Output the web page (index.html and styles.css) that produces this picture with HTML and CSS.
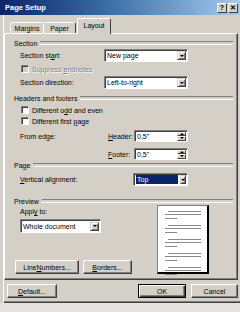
FILE: index.html
```html
<!DOCTYPE html>
<html>
<head>
<meta charset="utf-8">
<link rel="stylesheet" href="styles.css">
</head>
<body>
<div class="dialog">
  <div class="titlebar">
    <span class="title">Page Setup</span>
    <div class="tbtns">
      <span class="tbtn">?</span>
      <span class="tbtn">✕</span>
    </div>
  </div>
  <div class="tabs">
    <div class="tab">Margins</div>
    <div class="tab">Paper</div>
    <div class="tab active">Layout</div>
  </div>
  <div class="panel">
    <div class="grp">Section</div>
    <div class="row r1">
      <span class="lbl">Section st<u>a</u>rt:</span>
      <div class="combo w84"><span class="ctext">New page</span><span class="drop"></span></div>
    </div>
    <div class="row r2">
      <span class="cb dis"></span><span class="distext">Suppress <u>e</u>ndnotes</span>
    </div>
    <div class="row r3">
      <span class="lbl">Section direction:</span>
      <div class="combo w84"><span class="ctext">Left-to-right</span><span class="drop"></span></div>
    </div>
    <div class="grp g2">Headers and footers</div>
    <div class="row r4">
      <span class="cb"></span><span>Different o<u>d</u>d and even</span>
    </div>
    <div class="row r5">
      <span class="cb"></span><span>Different first <u>p</u>age</span>
    </div>
    <div class="row r6">
      <span class="lbl2">From edge:</span>
      <span class="lbl3"><u>H</u>eader:</span>
      <div class="spin"><span class="ctext">0,5"</span><span class="spbtns"><span class="sp up"></span><span class="sp dn"></span></span></div>
    </div>
    <div class="row r7">
      <span class="lbl2"></span>
      <span class="lbl3"><u>F</u>ooter:</span>
      <div class="spin"><span class="ctext">0,5"</span><span class="spbtns"><span class="sp up"></span><span class="sp dn"></span></span></div>
    </div>
    <div class="grp g3">Page</div>
    <div class="row r8">
      <span class="lbl4"><u>V</u>ertical alignment:</span>
      <div class="combo w55"><span class="ctext sel">Top</span><span class="drop"></span></div>
    </div>
    <div class="grp g4">Preview</div>
    <div class="preview">
      <div class="pleft">
        <span class="apply">Appl<u>y</u> to:</span>
        <div class="combo w81"><span class="ctext">Whole document</span><span class="drop"></span></div>
        <div class="pbtns">
          <span class="btn bln">Line <u>N</u>umbers...</span>
          <span class="btn bbo"><u>B</u>orders...</span>
        </div>
      </div>
      <div class="page">
        <div class="lines">
          <i class="ind"></i><i></i><i class="sh"></i>
          <i class="ind"></i><i></i><i class="sh"></i>
          <i class="ind"></i><i></i><i class="sh"></i>
          <i class="ind"></i><i></i><i class="sh"></i>
          <i class="ind"></i><i></i><i class="sh"></i>
        </div>
      </div>
    </div>
  </div>
  <div class="footer">
    <span class="btn bdef"><u>D</u>efault...</span>
    <span class="spacer"></span>
    <span class="btn bok">OK</span>
    <span class="btn bcan">Cancel</span>
  </div>
</div>
</body>
</html>
```

FILE: styles.css
```css
* { box-sizing: border-box; }
html, body { margin: 0; padding: 0; }
body {
  width: 240px;
  height: 312px;
  overflow: hidden;
  background: #e6e4e0;
  font-family: "Liberation Sans", Arial, sans-serif;
  font-size: 7px;
  color: #000;
}
u { text-decoration: underline; text-underline-offset: 1px; }

.dialog {
  width: 240px;
  height: 303px;
  background: #d4d0c8;
  border-left: 1px solid #d4d0c8;
  box-shadow: inset 2px 0 0 #d4d0c8, inset 3px 0 0 #ffffff, inset 0 -1px 0 #404040, inset 0 -2px 0 #808080;
  display: flex;
  flex-direction: column;
}

.titlebar {
  height: 15px;
  margin-left: -1px;
  background: linear-gradient(to right, #0a246a 0%, #3a6ea5 45%, #a6caf0 100%);
  display: flex;
  align-items: center;
  padding: 0 2px 0 5px;
}
.title { color: #fff; font-weight: bold; font-size: 7.5px; flex: 1; }
.tbtns { display: flex; gap: 1px; }
.tbtn {
  width: 10px; height: 10px;
  background: #d4d0c8;
  border: 1px solid; border-color: #fff #404040 #404040 #fff;
  font-size: 7px; font-weight: bold; line-height: 8px; text-align: center;
}

.tabs {
  height: 18px;
  display: flex;
  align-items: flex-end;
  padding-left: 9px;
  position: relative;
  z-index: 2;
}
.tab {
  height: 11px;
  border: 1px solid; border-bottom: none;
  border-color: #fff #404040 transparent #fff;
  border-radius: 2px 2px 0 0;
  background: #d4d0c8;
  padding: 1px 0 0 0;
  text-align: center;
  line-height: 9px;
}
.tab:nth-child(1) { width: 34px; }
.tab:nth-child(2) { width: 33px; margin-left: -1px; }
.tab.active {
  width: 34px;
  height: 16px;
  margin-left: 1px;
  margin-bottom: -1px;
  padding-top: 2px;
}

.panel {
  margin-left: 3px;
  width: 234px;
  height: 247px;
  border: 1px solid; border-color: #fff #404040 #404040 #fff;
  box-shadow: inset -1px -1px 0 #808080;
  display: flex;
  flex-direction: column;
  padding-top: 4px;
}

.grp {
  height: 10px;
  display: flex;
  align-items: center;
  gap: 3px;
  padding-left: 9px;
  padding-right: 4px;
}
.grp::after {
  content: "";
  flex: 1;
  height: 2px;
  border-top: 1px solid #808080;
  border-bottom: 1px solid #fff;
}
.g2 { margin-top: 4px; }
.g3 { margin-top: 0; }
.g4 { margin-top: 10px; }

.row { display: flex; align-items: center; padding-left: 15px; }
.r1 { margin-top: 1px; height: 13px; }
.r2 { margin-top: 2px; height: 10px; padding-left: 16px; }
.r3 { margin-top: 2px; height: 13px; }
.r4 { margin-top: 2px; height: 10px; padding-left: 16px; }
.r5 { margin-top: 1px; height: 10px; padding-left: 16px; }
.r6 { margin-top: 4px; height: 12px; }
.r7 { margin-top: 6px; height: 12px; }
.r8 { margin-top: 3px; height: 13px; }

.lbl { width: 84px; }
.lbl2 { width: 85px; }
.lbl3 { width: 29px; padding-left: 3px; }
.lbl4 { width: 113px; }
.distext { color: #808080; text-shadow: 1px 1px 0 #fff; }

.cb {
  width: 8px; height: 8px;
  background: #fff;
  border: 1px solid; border-color: #808080 #fff #fff #808080;
  box-shadow: inset 1px 1px 0 #404040;
  margin-right: 3px;
}
.cb.dis { background: #d4d0c8; }

.combo, .spin {
  display: flex;
  align-items: center;
  height: 13px;
  background: #fff;
  border: 1px solid; border-color: #808080 #fff #fff #808080;
  box-shadow: inset 1px 1px 0 #404040;
  padding: 1px 1px 1px 2px;
}
.w84 { width: 84px; }
.w55 { width: 55px; }
.w81 { width: 81px; height: 14px; }
.spin { width: 54px; height: 12px; }
.ctext { flex: 1; white-space: nowrap; overflow: hidden; line-height: 9px; }
.ctext.sel { background: #0a246a; color: #fff; flex: 0 0 42px; margin-right: 2px; padding-left: 1px; }
.drop {
  width: 9px; height: 9px;
  margin-left: auto;
  background: #d4d0c8;
  border: 1px solid; border-color: #d4d0c8 #404040 #404040 #d4d0c8;
  box-shadow: inset 1px 1px 0 #fff, inset -1px -1px 0 #808080;
  display: flex; align-items: center; justify-content: center;
}
.drop::after {
  content: "";
  border-left: 2px solid transparent;
  border-right: 2px solid transparent;
  border-top: 2px solid #000;
}
.spbtns { display: flex; flex-direction: column; width: 9px; height: 9px; }
.sp {
  flex: 1;
  background: #d4d0c8;
  border: 1px solid; border-color: #fff #404040 #404040 #fff;
  display: flex; align-items: center; justify-content: center;
}
.sp.up::after {
  content: ""; border-left: 2px solid transparent; border-right: 2px solid transparent; border-bottom: 2px solid #000;
}
.sp.dn::after {
  content: ""; border-left: 2px solid transparent; border-right: 2px solid transparent; border-top: 2px solid #000;
}

.preview {
  display: grid;
  grid-template-columns: 142px 52px;
  padding-left: 10px;
  margin-top: -1px;
}
.pleft { display: flex; flex-direction: column; }
.apply { margin: 2px 0 0 5px; height: 10px; line-height: 10px; }
.pleft .combo { margin: 2px 0 0 5px; }
.pbtns { margin-top: auto; display: flex; gap: 4px; }

.btn {
  height: 14px;
  display: flex; align-items: center; justify-content: center;
  background: #d4d0c8;
  border: 1px solid; border-color: #fff #404040 #404040 #fff;
  box-shadow: inset -1px -1px 0 #808080;
}
.bln { width: 64px; }
.bbo { width: 49px; }

.page {
  height: 69px;
  background: #fff;
  border: 1px solid #404040;
  border-right-width: 2px;
  border-bottom-width: 2px;
  border-right-color: #000;
  border-bottom-color: #000;
  border-left-color: #808080;
  border-top-color: #808080;
  padding: 5px 6px 0 7px;
}
.lines { display: flex; flex-direction: column; }
.lines i { display: block; height: 1px; background: #8a8a8a; margin-top: 2px; }
.lines i.ind { margin-left: 3px; margin-top: 6px; }
.lines i:first-child { margin-top: 0; }
.lines i.sh { width: 12px; margin-top: 3px; }

.footer {
  display: flex;
  gap: 5px;
  padding: 4px 2px 0 6px;
}
.spacer { flex: 1; }
.bdef { width: 50px; }
.bok { width: 48px; border-color: #000; box-shadow: inset 1px 1px 0 #fff, inset -1px -1px 0 #404040, inset -2px -2px 0 #808080; }
.bcan { width: 47px; }
```
